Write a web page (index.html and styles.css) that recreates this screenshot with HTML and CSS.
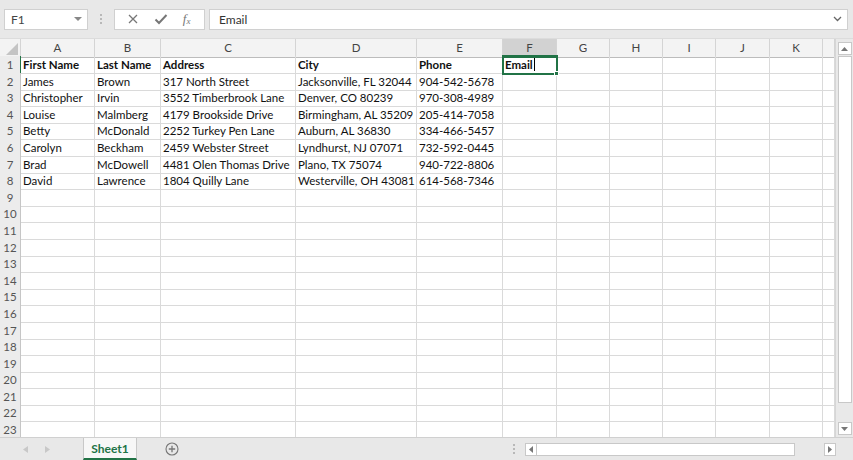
FILE: index.html
```html
<!DOCTYPE html>
<html>
<head>
<meta charset="utf-8">
<link rel="stylesheet" href="styles.css">
</head>
<body>
<div class="app">
  <div class="toolbar">
    <div class="namebox"><span>F1</span><svg class="dd" width="8" height="5" viewBox="0 0 8 5"><path d="M0 0h8L4 4z" fill="#888"/></svg></div>
    <div class="grip"><i></i><i></i><i></i></div>
    <div class="fbtns">
      <svg width="12" height="12" viewBox="0 0 12 12"><path d="M2 2L10 10M10 2L2 10" stroke="#777" stroke-width="1.3"/></svg>
      <svg width="14" height="12" viewBox="0 0 14 12"><path d="M1.5 6.5L5 10L12.5 2" stroke="#777" stroke-width="2" fill="none"/></svg>
      <span class="fx">f<sub>x</sub></span>
    </div>
    <div class="formula"><span>Email</span><svg width="9" height="6" viewBox="0 0 9 6"><path d="M1 1L4.5 4.5L8 1" stroke="#666" stroke-width="1.3" fill="none"/></svg></div>
  </div>
  <div class="main">
    <div class="sheet">
      <div class="row colhead">
        <span class="corner"><svg width="12" height="12" viewBox="0 0 12 12"><path d="M12 0V12H0z" fill="#c4c4c4"/></svg></span>
        <span>A</span><span>B</span><span>C</span><span>D</span><span>E</span><span class="sel">F</span><span>G</span><span>H</span><span>I</span><span>J</span><span>K</span><span></span>
      </div>
      <div class="row b"><span class="rh act">1</span><span>First Name</span><span>Last Name</span><span>Address</span><span>City</span><span>Phone</span><span class="cur">Email<i class="caret"></i><i class="handle"></i></span><span></span><span></span><span></span><span></span><span></span><span></span></div>
      <div class="row"><span class="rh">2</span><span>James</span><span>Brown</span><span>317 North Street</span><span>Jacksonville, FL 32044</span><span>904-542-5678</span><span></span><span></span><span></span><span></span><span></span><span></span><span></span></div>
      <div class="row"><span class="rh">3</span><span>Christopher</span><span>Irvin</span><span>3552 Timberbrook Lane</span><span>Denver, CO 80239</span><span>970-308-4989</span><span></span><span></span><span></span><span></span><span></span><span></span><span></span></div>
      <div class="row"><span class="rh">4</span><span>Louise</span><span>Malmberg</span><span>4179 Brookside Drive</span><span>Birmingham, AL 35209</span><span>205-414-7058</span><span></span><span></span><span></span><span></span><span></span><span></span><span></span></div>
      <div class="row"><span class="rh">5</span><span>Betty</span><span>McDonald</span><span>2252 Turkey Pen Lane</span><span>Auburn, AL 36830</span><span>334-466-5457</span><span></span><span></span><span></span><span></span><span></span><span></span><span></span></div>
      <div class="row"><span class="rh">6</span><span>Carolyn</span><span>Beckham</span><span>2459 Webster Street</span><span>Lyndhurst, NJ 07071</span><span>732-592-0445</span><span></span><span></span><span></span><span></span><span></span><span></span><span></span></div>
      <div class="row"><span class="rh">7</span><span>Brad</span><span>McDowell</span><span>4481 Olen Thomas Drive</span><span>Plano, TX 75074</span><span>940-722-8806</span><span></span><span></span><span></span><span></span><span></span><span></span><span></span></div>
      <div class="row"><span class="rh">8</span><span>David</span><span>Lawrence</span><span>1804 Quilly Lane</span><span>Westerville, OH 43081</span><span>614-568-7346</span><span></span><span></span><span></span><span></span><span></span><span></span><span></span></div>
      <div class="row"><span class="rh">9</span><span></span><span></span><span></span><span></span><span></span><span></span><span></span><span></span><span></span><span></span><span></span><span></span></div>
      <div class="row"><span class="rh">10</span><span></span><span></span><span></span><span></span><span></span><span></span><span></span><span></span><span></span><span></span><span></span><span></span></div>
      <div class="row"><span class="rh">11</span><span></span><span></span><span></span><span></span><span></span><span></span><span></span><span></span><span></span><span></span><span></span><span></span></div>
      <div class="row"><span class="rh">12</span><span></span><span></span><span></span><span></span><span></span><span></span><span></span><span></span><span></span><span></span><span></span><span></span></div>
      <div class="row"><span class="rh">13</span><span></span><span></span><span></span><span></span><span></span><span></span><span></span><span></span><span></span><span></span><span></span><span></span></div>
      <div class="row"><span class="rh">14</span><span></span><span></span><span></span><span></span><span></span><span></span><span></span><span></span><span></span><span></span><span></span><span></span></div>
      <div class="row"><span class="rh">15</span><span></span><span></span><span></span><span></span><span></span><span></span><span></span><span></span><span></span><span></span><span></span><span></span></div>
      <div class="row"><span class="rh">16</span><span></span><span></span><span></span><span></span><span></span><span></span><span></span><span></span><span></span><span></span><span></span><span></span></div>
      <div class="row"><span class="rh">17</span><span></span><span></span><span></span><span></span><span></span><span></span><span></span><span></span><span></span><span></span><span></span><span></span></div>
      <div class="row"><span class="rh">18</span><span></span><span></span><span></span><span></span><span></span><span></span><span></span><span></span><span></span><span></span><span></span><span></span></div>
      <div class="row"><span class="rh">19</span><span></span><span></span><span></span><span></span><span></span><span></span><span></span><span></span><span></span><span></span><span></span><span></span></div>
      <div class="row"><span class="rh">20</span><span></span><span></span><span></span><span></span><span></span><span></span><span></span><span></span><span></span><span></span><span></span><span></span></div>
      <div class="row"><span class="rh">21</span><span></span><span></span><span></span><span></span><span></span><span></span><span></span><span></span><span></span><span></span><span></span><span></span></div>
      <div class="row"><span class="rh">22</span><span></span><span></span><span></span><span></span><span></span><span></span><span></span><span></span><span></span><span></span><span></span><span></span></div>
      <div class="row"><span class="rh">23</span><span></span><span></span><span></span><span></span><span></span><span></span><span></span><span></span><span></span><span></span><span></span><span></span></div>
    </div>
    <div class="vscroll">
      <div class="sbtn"><svg width="7" height="4" viewBox="0 0 7 4"><path d="M0 4h7L3.5 0z" fill="#777"/></svg></div>
      <div class="vthumb"></div>
      <div class="vtrack"></div>
      <div class="sbtn"><svg width="7" height="4" viewBox="0 0 7 4"><path d="M0 0h7L3.5 4z" fill="#777"/></svg></div>
    </div>
  </div>
  <div class="tabbar">
    <div class="nav">
      <svg width="5" height="7" viewBox="0 0 5 7"><path d="M5 0V7L0 3.5z" fill="#c8c8c8"/></svg>
      <svg width="5" height="7" viewBox="0 0 5 7"><path d="M0 0V7L5 3.5z" fill="#c8c8c8"/></svg>
    </div>
    <div class="tab">Sheet1</div>
    <div class="add"><svg width="14" height="14" viewBox="0 0 14 14"><circle cx="7" cy="7" r="6" fill="none" stroke="#777" stroke-width="1.1"/><path d="M7 3.8V10.2M3.8 7H10.2" stroke="#777" stroke-width="1.3"/></svg></div>
    <div class="spacer"></div>
    <div class="grip2"><i></i><i></i><i></i></div>
    <div class="hscroll">
      <div class="hbtn"><svg width="4" height="7" viewBox="0 0 4 7"><path d="M4 0V7L0 3.5z" fill="#777"/></svg></div>
      <div class="hthumb"></div>
      <div class="htrack"></div>
      <div class="hbtn"><svg width="4" height="7" viewBox="0 0 4 7"><path d="M0 0V7L4 3.5z" fill="#777"/></svg></div>
    </div>
  </div>
</div>
</body>
</html>
```
FILE: styles.css
```css
* { box-sizing: border-box; }
html, body { margin: 0; padding: 0; }
body {
  width: 853px;
  height: 460px;
  overflow: hidden;
  font-family: Lato, "Open Sans", "Liberation Sans", sans-serif;
  background: #fff;
  color: #000;
}
.app { display: flex; flex-direction: column; height: 460px; }

.toolbar {
  height: 38px;
  background: #e8e8e8;
  display: flex;
  align-items: center;
  padding: 0 5px 0 4px;
  flex: none;
}
.namebox {
  width: 84px; height: 21px;
  background: #fff;
  border: 1px solid #d0d0d0;
  display: flex; align-items: center; justify-content: space-between;
  padding: 0 5px 0 6px;
  font-size: 12px; color: #444;
}
.grip { width: 26px; display: flex; flex-direction: column; align-items: center; gap: 2px; }
.grip i, .grip2 i { display: block; width: 2px; height: 2px; background: #b8b8b8; }
.fbtns {
  width: 91px; height: 21px;
  background: #fff;
  border: 1px solid #d0d0d0;
  display: flex; align-items: center; justify-content: space-around;
  padding: 0 6px 0 4px;
}
.fx { font-family: "Liberation Serif", serif; font-style: italic; font-size: 13px; color: #777; line-height: 1; }
.fx sub { font-size: 9px; vertical-align: -1px; }
.formula {
  flex: 1; height: 21px; margin-left: 4px;
  background: #fff;
  border: 1px solid #d0d0d0;
  display: flex; align-items: center; justify-content: space-between;
  padding: 0 5px 0 9px;
  font-size: 12px; color: #333;
}

.main { display: flex; flex: 1; min-height: 0; overflow: hidden; border-top: 1px solid #dcdcdc; }
.sheet { flex: 1; overflow: hidden; }
.row {
  display: grid;
  grid-template-columns: 21px 74px 66px 135px 121px 86px 54px 53px 53px 53px 54px 53px 12px;
  height: 16.6px;
  font-size: 11.5px;
  line-height: 17px;
  color: #111;
}
.row > span {
  border-right: 1px solid #dadada;
  border-bottom: 1px solid #dadada;
  padding-left: 2px;
  white-space: nowrap;
  overflow: visible;
  position: relative;
}
.row.b > span { font-weight: bold; }
.row > .rh {
  background: #ececec;
  color: #555;
  text-align: center;
  padding: 0;
  border-right-color: #c6c6c6;
  border-bottom-color: #d6d6d6;
  font-weight: normal !important;
  font-size: 11.5px;
}
.row > .rh.act { border-right: 1px solid #217346; }
.colhead { height: 17px; }
.colhead > span {
  background: #f3f3f3;
  color: #444;
  text-align: center;
  padding: 0;
  border-right-color: #d4d4d4;
  border-bottom-color: #bcbcbc;
  line-height: 17px;
}
.colhead > .corner { background: #f3f3f3; display: flex; align-items: flex-end; justify-content: flex-end; padding: 0 2px 2px 0; }
.colhead > .sel { background: #d2d2d2; border-bottom: 2px solid #217346; }
.row > .cur { outline: 2px solid #217346; outline-offset: -1px; z-index: 2; }
.caret { display: inline-block; width: 1px; height: 13px; background: #000; vertical-align: -2px; margin-left: 1px; }
.handle { position: absolute; width: 5px; height: 5px; background: #217346; border: 1px solid #fff; right: -3px; bottom: -3px; }

.vscroll {
  width: 18px; flex: none;
  background: #e9e9e9;
  border-left: 1px solid #d6d6d6;
  display: flex; flex-direction: column; align-items: center;
  padding: 3px 0 2px;
  gap: 1px;
}
.sbtn { width: 14px; height: 13px; background: #fff; border: 1px solid #c8c8c8; display: flex; align-items: center; justify-content: center; }
.vthumb { width: 14px; height: 347px; background: #fff; border: 1px solid #c8c8c8; }
.vtrack { flex: 1; }

.tabbar {
  height: 23px; flex: none;
  background: #e8e8e8;
  display: flex; align-items: center;
  border-top: 1px solid #d0d0d0;
}
.nav { width: 83px; display: flex; gap: 17px; padding-left: 23px; align-items: center; }
.tab {
  width: 54px; height: 100%;
  background: #f7f7f7;
  border-left: 1px solid #c8c8c8; border-right: 1px solid #c8c8c8;
  border-bottom: 2px solid #217346;
  color: #217346; font-weight: bold; font-size: 12px;
  display: flex; align-items: center; justify-content: center;
}
.add { margin-left: 28px; display: flex; }
.spacer { flex: 1; }
.grip2 { display: flex; flex-direction: column; gap: 2px; margin-right: 10px; }
.hscroll { width: 311px; height: 13px; display: flex; margin-right: 17px; }
.hbtn { width: 12px; height: 13px; background: #fff; border: 1px solid #c8c8c8; display: flex; align-items: center; justify-content: center; }
.hthumb { width: 258px; height: 13px; background: #fff; border: 1px solid #c8c8c8; border-left: none; }
.htrack { flex: 1; }
```
